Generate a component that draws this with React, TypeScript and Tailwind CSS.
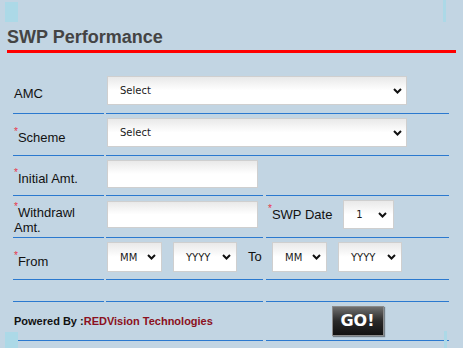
const line = "border-b border-[#2b79cf]";
const labelCls = "text-[13px] leading-[15px] text-[#111]";
const boxCls =
  "border border-[#cfcfcf] bg-gradient-to-b from-[#e9e9e9] via-white to-white";

function Star() {
  return <span className="relative -top-[3px] self-start text-[10px] leading-none text-[#e8344a]">*</span>;
}

function Chevron() {
  return (
    <svg width="9" height="6" viewBox="0 0 9 6" className="shrink-0">
      <path d="M1 1 L4.5 4.5 L8 1" fill="none" stroke="#111" strokeWidth="2" />
    </svg>
  );
}

function FakeSelect({ text, w, h, pl, pr = 4 }: { text: string; w: string; h: string; pl: string; pr?: number }) {
  return (
    <div
      className={`${boxCls} ${w} ${h} ${pl} flex items-center justify-between font-['DejaVu_Sans',sans-serif] text-[10px] text-[#1a1a1a]`}
      style={{ paddingRight: pr }}
    >
      <span>{text}</span>
      <Chevron />
    </div>
  );
}

function Label({ star, children }: { star?: boolean; children: React.ReactNode }) {
  return (
    <div className={`flex ${labelCls}`}>
      {star && <Star />}
      <span>{children}</span>
    </div>
  );
}

export default function App() {
  return (
    <div className="relative h-[348px] w-[463px] overflow-hidden bg-[#c2d5e3] font-['Liberation_Sans',Arial,sans-serif]">
      <div className="absolute left-[5px] top-[2px] h-[20px] w-[13px] bg-[#acd9e7]" />
      <div className="absolute left-[443px] top-0 h-[22px] w-[3px] bg-[#acd9e7]" />
      <div className="absolute left-[5px] top-[332px] h-[16px] w-[13px] bg-[#acd9e7]" />
      <div className="absolute left-[444px] top-[331px] h-[17px] w-[3px] bg-[#acd9e7]" />

      <div className="ml-[7px] w-[449px] pt-[26px]">
        <h1 className="text-[18px] font-bold leading-[22px] text-[#444]">SWP Performance</h1>
        <div className="mt-[2px] h-[3px] bg-[#ff0000]" />
      </div>

      <div className="ml-[13px] mt-[14px] flex flex-col gap-[2px]">
        {/* AMC */}
        <div className="flex h-[47px]">
          <div className={`${line} w-[91px] pt-[19px] pl-[1px]`}>
            <Label>AMC</Label>
          </div>
          <div className={`${line} ml-[2px] w-[343px] pt-[9px] pl-[1px]`}>
            <FakeSelect text="Select" w="w-[300px]" h="h-[29px]" pl="pl-[12px]" />
          </div>
        </div>

        {/* Scheme */}
        <div className="flex h-[40px]">
          <div className={`${line} w-[91px] pt-[14px] pl-[1px]`}>
            <Label star>Scheme</Label>
          </div>
          <div className={`${line} ml-[2px] w-[343px] pt-[2px] pl-[1px]`}>
            <FakeSelect text="Select" w="w-[300px]" h="h-[29px]" pl="pl-[12px]" />
          </div>
        </div>

        {/* Initial Amt */}
        <div className="flex h-[38px]">
          <div className={`${line} w-[91px] pt-[13px] pl-[1px]`}>
            <Label star>Initial Amt.</Label>
          </div>
          <div className={`${line} ml-[2px] w-[157px] pt-[2px] pl-[1px]`}>
            <div className={`${boxCls} h-[28px] w-[151px]`} />
          </div>
          <div className={`${line} ml-[3px] w-[183px]`} />
        </div>

        {/* Withdrawl */}
        <div className="flex h-[40px]">
          <div className={`${line} w-[91px] pt-[7px] pl-[1px]`}>
            <div className={labelCls}>
              <span className="relative -top-[3px] align-top text-[10px] leading-none text-[#e8344a]">*</span>
              Withdrawl
              <br />
              Amt.
            </div>
          </div>
          <div className={`${line} ml-[2px] w-[157px] pt-[3px] pl-[1px]`}>
            <div className={`${boxCls} h-[27px] w-[151px]`} />
          </div>
          <div className={`${line} ml-[3px] flex w-[183px] items-start pl-[2px]`}>
            <div className="pt-[9px]">
              <Label star>SWP Date</Label>
            </div>
            <div className="ml-[11px] pt-[2px]">
              <FakeSelect text="1" w="w-[51px]" h="h-[29px]" pl="pl-[12px]" pr={6} />
            </div>
          </div>
        </div>

        {/* From */}
        <div className="flex h-[40px]">
          <div className={`${line} w-[91px] pt-[14px] pl-[1px]`}>
            <Label star>From</Label>
          </div>
          <div className={`${line} ml-[2px] flex w-[157px] items-start pt-[2px] pl-[1px]`}>
            <FakeSelect text="MM" w="w-[55px]" h="h-[30px]" pl="pl-[12px]" pr={5} />
            <div className="ml-[11px]">
              <FakeSelect text="YYYY" w="w-[64px]" h="h-[30px]" pl="pl-[12px]" pr={5} />
            </div>
            <div className={`${labelCls} ml-[11px] pt-[7px]`}>To</div>
          </div>
          <div className={`${line} ml-[3px] flex w-[183px] items-start pt-[2px] pl-[6px]`}>
            <FakeSelect text="MM" w="w-[55px]" h="h-[30px]" pl="pl-[12px]" pr={5} />
            <div className="ml-[11px]">
              <FakeSelect text="YYYY" w="w-[64px]" h="h-[30px]" pl="pl-[12px]" pr={5} />
            </div>
          </div>
        </div>

        {/* empty */}
        <div className="flex h-[20px]">
          <div className={`${line} w-[91px]`} />
          <div className={`${line} ml-[2px] w-[157px]`} />
          <div className={`${line} ml-[3px] w-[183px]`} />
        </div>

        {/* footer */}
        <div className="flex h-[37px]">
          <div className={`${line} flex w-[250px] items-start pl-[1px] pt-[11px]`}>
            <span className="text-[11px] font-bold leading-[13px] text-[#111]">
              Powered By :<span className="text-[#8b1020]">REDVision Technologies</span>
            </span>
          </div>
          <div className={`${line} ml-[3px] flex w-[183px] justify-center pt-[2px]`}>
            <div className="flex h-[30px] w-[52px] items-center justify-center border border-[#8a8a8a] bg-gradient-to-b from-[#707070] via-[#2a2a2a] to-[#111] shadow-[1px_1px_1px_rgba(0,0,0,0.4)]">
              <span className="font-['DejaVu_Sans',sans-serif] text-[16px] font-bold leading-none text-white">GO!</span>
            </div>
          </div>
        </div>
      </div>
    </div>
  );
}
